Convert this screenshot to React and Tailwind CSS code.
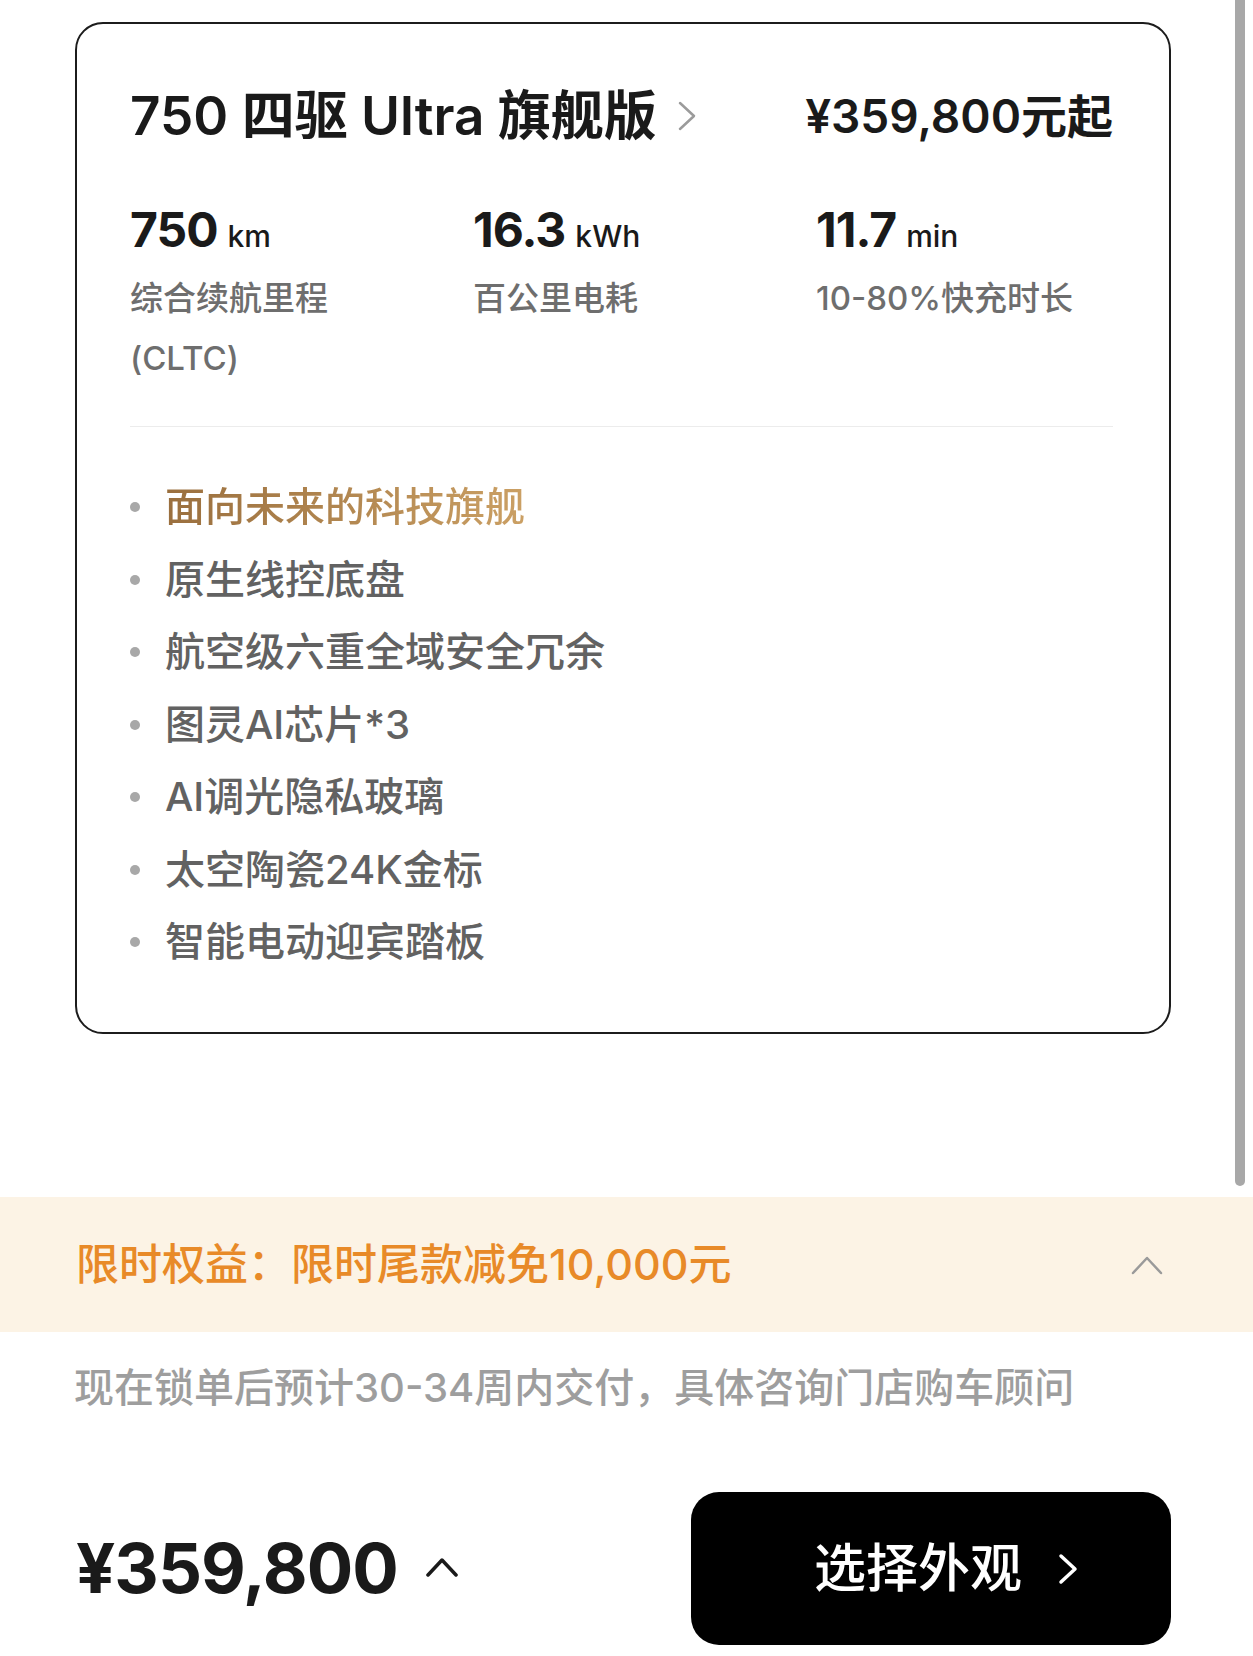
import React from "react";

const stats = [
  { value: "750", unit: "km", label: "综合续航里程(CLTC)" },
  { value: "16.3", unit: "kWh", label: "百公里电耗" },
  { value: "11.7", unit: "min", label: "10-80%快充时长" },
];

const features = [
  "原生线控底盘",
  "航空级六重全域安全冗余",
  "图灵AI芯片*3",
  "AI调光隐私玻璃",
  "太空陶瓷24K金标",
  "智能电动迎宾踏板",
];

const Chevron = ({ dir = "right", className, stroke, width = 2.5 }) => {
  if (dir === "up") {
    return (
      <svg className={className} viewBox="0 0 32 20" fill="none">
        <polyline points="2,18 16,3 30,18" stroke={stroke} strokeWidth={width} strokeLinecap="round" strokeLinejoin="round" />
      </svg>
    );
  }
  return (
    <svg className={className} viewBox="0 0 20 32" fill="none">
      <polyline points="3,3 17,16 3,29" stroke={stroke} strokeWidth={width} strokeLinecap="round" strokeLinejoin="round" />
    </svg>
  );
};

export default function App() {
  return (
    <div className="w-[1253px] h-[1656px] bg-white overflow-hidden font-['Inter','Noto_Sans_CJK_SC',sans-serif] text-[#1a1a1a]">
      <div className="h-[1197px] flex">
        <div className="flex-1 pl-[75px] pt-[22px]">
          <div className="w-[1096px] h-[1012px] border-[2.5px] border-[#1c1c1c] rounded-[28px] pl-[53px] pr-[56px] pt-[60px]">
            {/* title */}
            <div className="flex items-center justify-between h-[64px]">
              <div className="flex items-center">
                <span className="text-[53px] leading-[64px] font-semibold">750 四驱 Ultra 旗舰版</span>
                <Chevron className="w-[20px] h-[32px] ml-[20px]" stroke="#9b9b9b" width={2.5} />
              </div>
              <span className="text-[46px] leading-[64px] font-semibold">¥359,800元起</span>
            </div>

            {/* stats */}
            <div className="grid grid-cols-3 gap-x-[46px] mt-[58px]">
              {stats.map((s) => (
                <div key={s.value}>
                  <div className="flex items-baseline h-[48px] leading-none">
                    <span className="text-[48px] font-bold tracking-[-1px]">{s.value}</span>
                    <span className="text-[30px] font-medium ml-[10px]">{s.unit}</span>
                  </div>
                  <div className="mt-[14px] text-[33px] leading-[60px] font-medium text-[#6e6e6e]">{s.label}</div>
                </div>
              ))}
            </div>

            <div className="h-px bg-[#ececec] mt-[38px]" />

            {/* features */}
            <ul className="mt-[44px]">
              <li className="flex items-center h-[72.5px]">
                <span className="w-[10px] h-[10px] rounded-full bg-[#a8a8a8] mr-[25px]" />
                <span className="text-[40px] font-medium bg-gradient-to-r from-[#9a6f3e] to-[#cba064] bg-clip-text text-transparent">
                  面向未来的科技旗舰
                </span>
              </li>
              {features.map((f) => (
                <li key={f} className="flex items-center h-[72.5px]">
                  <span className="w-[10px] h-[10px] rounded-full bg-[#a8a8a8] mr-[25px]" />
                  <span className="text-[40px] font-medium text-[#626262]">{f}</span>
                </li>
              ))}
            </ul>
          </div>
        </div>
        {/* scrollbar */}
        <div className="w-[10px] h-[1186px] bg-[#a8a8a8] rounded-b-full mr-[8px]" />
      </div>

      {/* offer banner */}
      <div className="h-[135px] bg-[#fcf3e5] flex items-center justify-between pl-[76px] pr-[90px]">
        <span className="text-[43px] font-medium text-[#e88a28]">限时权益：限时尾款减免10,000元</span>
        <Chevron dir="up" className="w-[32px] h-[20px]" stroke="#9a9a9a" width={2.5} />
      </div>

      <div className="pl-[74px] mt-[28px] text-[40px] leading-[56px] font-medium text-[#9e9e9e]">
        现在锁单后预计30-34周内交付，具体咨询门店购车顾问
      </div>

      {/* bottom bar */}
      <div className="flex items-center justify-between pl-[76px] pr-[82px] mt-[76px]">
        <div className="flex items-center">
          <span className="text-[69px] font-bold leading-none tracking-[-1px]">¥359,800</span>
          <Chevron dir="up" className="w-[32px] h-[20px] ml-[28px] -mt-[4px]" stroke="#1a1a1a" width={3.5} />
        </div>
        <button className="w-[480px] h-[153px] bg-black rounded-[28px] flex items-center justify-center pl-[32px]">
          <span className="text-[52px] font-medium text-white">选择外观</span>
          <Chevron className="w-[24px] h-[32px] ml-[34px]" stroke="#ffffff" width={3.5} />
        </button>
      </div>
    </div>
  );
}
